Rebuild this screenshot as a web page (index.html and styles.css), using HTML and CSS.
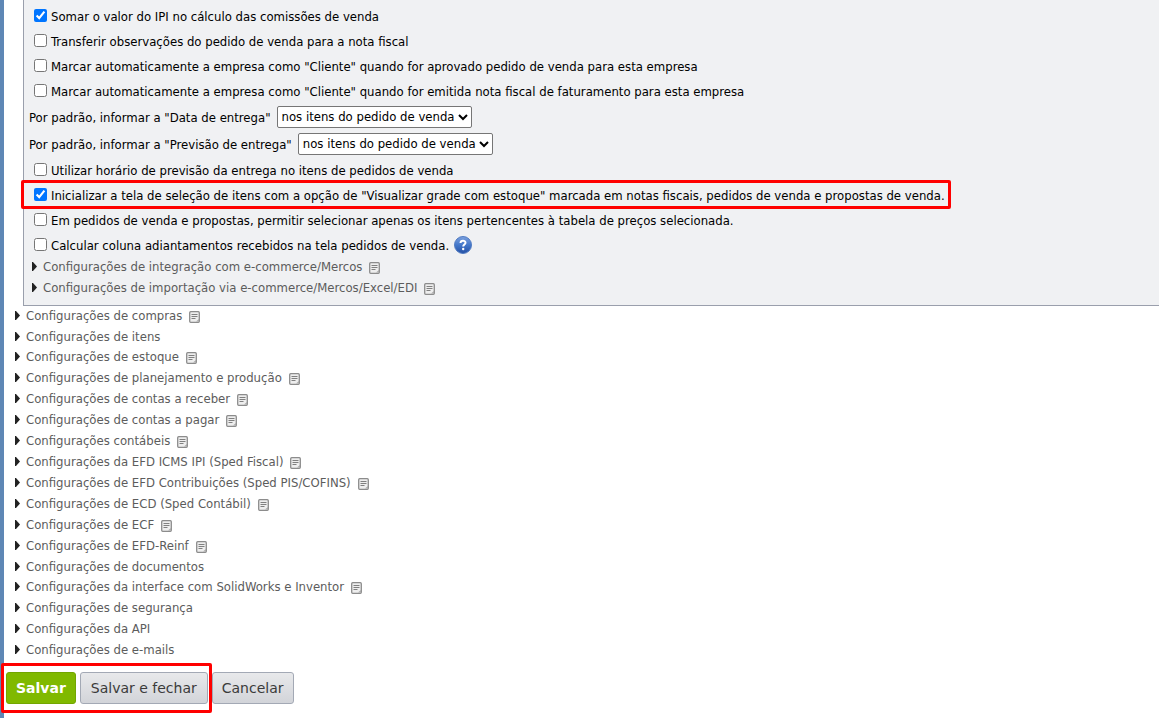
FILE: index.html
```html
<!DOCTYPE html>
<html lang="pt-BR">
<head>
<meta charset="utf-8">
<title>Configurações</title>
<link rel="stylesheet" href="styles.css">
</head>
<body>
<svg class="defs" aria-hidden="true">
  <symbol id="note" viewBox="0 0 11 12">
    <rect x=".7" y=".7" width="9.600" height="10.600" rx="1" fill="#eee" stroke="#8c8c8c" stroke-width="1.300"/>
    <path d="M2.500 3.500h6M2.500 5.500h6M2.500 7.500h4" stroke="#808080" fill="none"/>
    <path d="M7 10.500h3V8z" fill="#aaa"/>
  </symbol>
  <symbol id="arrow" viewBox="0 0 5 9"><path d="M0 0h1l4 4.500L1 9H0z" fill="#222"/></symbol>
</svg>
<form class="page">
  <section class="panel">
    <div class="row"><input type="checkbox" id="c1" checked><label for="c1">Somar o valor do IPI no cálculo das comissões de venda</label></div>
    <div class="row"><input type="checkbox" id="c2"><label for="c2">Transferir observações do pedido de venda para a nota fiscal</label></div>
    <div class="row"><input type="checkbox" id="c3"><label for="c3">Marcar automaticamente a empresa como "Cliente" quando for aprovado pedido de venda para esta empresa</label></div>
    <div class="row"><input type="checkbox" id="c4"><label for="c4">Marcar automaticamente a empresa como "Cliente" quando for emitida nota fiscal de faturamento para esta empresa</label></div>
    <div class="row choice"><label for="s1">Por padrão, informar a "Data de entrega"</label><select id="s1"><option>nos itens do pedido de venda</option></select></div>
    <div class="row choice"><label for="s2">Por padrão, informar a "Previsão de entrega"</label><select id="s2"><option>nos itens do pedido de venda</option></select></div>
    <div class="row"><input type="checkbox" id="c5"><label for="c5">Utilizar horário de previsão da entrega no itens de pedidos de venda</label></div>
    <div class="row marked"><input type="checkbox" id="c6" checked><label for="c6">Inicializar a tela de seleção de itens com a opção de "Visualizar grade com estoque" marcada em notas fiscais, pedidos de venda e propostas de venda.</label></div>
    <div class="row"><input type="checkbox" id="c7"><label for="c7">Em pedidos de venda e propostas, permitir selecionar apenas os itens pertencentes à tabela de preços selecionada.</label></div>
    <div class="row"><input type="checkbox" id="c8"><label for="c8">Calcular coluna adiantamentos recebidos na tela pedidos de venda.</label>
      <svg class="help" viewBox="0 0 18 18" role="img" aria-label="Ajuda"><defs><linearGradient id="g" x2="0" y2="1"><stop stop-color="#7ca0dd"/><stop offset=".5" stop-color="#4377ca"/><stop offset="1" stop-color="#2450a4"/></linearGradient></defs><circle cx="9" cy="9" r="8.500" fill="url(#g)" stroke="#527cc2"/><path d="M6.500 7C6.500 3.900 11.500 3.900 11.500 6.800C11.500 8.500 9.200 8.600 9.200 10.500" fill="none" stroke="#fff" stroke-width="2"/><circle cx="9.200" cy="13" r="1.200" fill="#fff"/></svg></div>
    <ul class="tree">
      <li><svg class="arrow"><use href="#arrow"/></svg><a href="#">Configurações de integração com e-commerce/Mercos</a><svg class="note"><use href="#note"/></svg></li>
      <li><svg class="arrow"><use href="#arrow"/></svg><a href="#">Configurações de importação via e-commerce/Mercos/Excel/EDI</a><svg class="note"><use href="#note"/></svg></li>
    </ul>
  </section>
  <ul class="tree main">
    <li><svg class="arrow"><use href="#arrow"/></svg><a href="#">Configurações de compras</a><svg class="note"><use href="#note"/></svg></li>
    <li class="short"><svg class="arrow"><use href="#arrow"/></svg><a href="#">Configurações de itens</a></li>
    <li><svg class="arrow"><use href="#arrow"/></svg><a href="#">Configurações de estoque</a><svg class="note"><use href="#note"/></svg></li>
    <li><svg class="arrow"><use href="#arrow"/></svg><a href="#">Configurações de planejamento e produção</a><svg class="note"><use href="#note"/></svg></li>
    <li><svg class="arrow"><use href="#arrow"/></svg><a href="#">Configurações de contas a receber</a><svg class="note"><use href="#note"/></svg></li>
    <li><svg class="arrow"><use href="#arrow"/></svg><a href="#">Configurações de contas a pagar</a><svg class="note"><use href="#note"/></svg></li>
    <li><svg class="arrow"><use href="#arrow"/></svg><a href="#">Configurações contábeis</a><svg class="note"><use href="#note"/></svg></li>
    <li><svg class="arrow"><use href="#arrow"/></svg><a href="#">Configurações da EFD ICMS IPI (Sped Fiscal)</a><svg class="note"><use href="#note"/></svg></li>
    <li><svg class="arrow"><use href="#arrow"/></svg><a href="#">Configurações de EFD Contribuições (Sped PIS/COFINS)</a><svg class="note"><use href="#note"/></svg></li>
    <li><svg class="arrow"><use href="#arrow"/></svg><a href="#">Configurações de ECD (Sped Contábil)</a><svg class="note"><use href="#note"/></svg></li>
    <li><svg class="arrow"><use href="#arrow"/></svg><a href="#">Configurações de ECF</a><svg class="note"><use href="#note"/></svg></li>
    <li><svg class="arrow"><use href="#arrow"/></svg><a href="#">Configurações de EFD-Reinf</a><svg class="note"><use href="#note"/></svg></li>
    <li class="short"><svg class="arrow"><use href="#arrow"/></svg><a href="#">Configurações de documentos</a></li>
    <li><svg class="arrow"><use href="#arrow"/></svg><a href="#">Configurações da interface com SolidWorks e Inventor</a><svg class="note"><use href="#note"/></svg></li>
    <li><svg class="arrow"><use href="#arrow"/></svg><a href="#">Configurações de segurança</a></li>
    <li><svg class="arrow"><use href="#arrow"/></svg><a href="#">Configurações da API</a></li>
    <li><svg class="arrow"><use href="#arrow"/></svg><a href="#">Configurações de e-mails</a></li>
  </ul>
  <div class="actions">
    <div class="saves"><button type="button" class="btn primary">Salvar</button><button type="button" class="btn wide">Salvar e fechar</button></div>
    <button type="button" class="btn">Cancelar</button>
  </div>
</form>
</body>
</html>
```
FILE: styles.css
```css
* { box-sizing: border-box; }
body {
  margin: 0;
  background: #fff;
  color: #000;
  font: 13px/19px "DejaVu Sans Condensed", "DejaVu Sans", sans-serif;
}
.defs { display: none; }
.page {
  min-height: 100vh;
  border-left: 4px solid #5e87b5;
}
.panel {
  margin-left: 19px;
  padding: 3px 0 6px 5px;
  background: #f0f1f3;
  border-left: 1px solid #9a9fac;
  border-bottom: 1px solid #9a9fac;
}
.row {
  display: flex;
  align-items: center;
  width: max-content;
  height: 25px;
}
.row label { padding-top: 2px; }
.row input {
  width: 13px;
  height: 13px;
  margin: 0 4px 0 5px;
}
.choice { height: 27px; gap: 6px; }
select {
  height: 22px;
  padding: 0;
  background: #fff;
  color: #000;
  border: 1px solid #767676;
  border-radius: 2px;
  font: inherit;
}
.marked { position: relative; }
.marked::after,
.saves::after {
  content: "";
  position: absolute;
  border: 3px solid #f00;
  border-radius: 2px;
  pointer-events: none;
}
.marked::after { inset: -2px -6px -2px -8px; }
.help { width: 18px; height: 18px; margin-left: 5px; }
.tree {
  margin: 0;
  padding: 0 0 0 3px;
  list-style: none;
}
.tree li { display: flex; align-items: flex-start; height: 21px; }
.tree .short { height: 20px; }
.main { padding-left: 11px; }
.tree a { color: #5c5c5c; text-decoration: none; }
.arrow { width: 5px; height: 9px; margin: 5px 6px 0 0; }
.note { width: 11px; height: 12px; margin: 5px 0 0 7px; }
.actions {
  display: flex;
  gap: 4px;
  padding: 11px 2px 14px;
}
.saves { position: relative; display: flex; gap: 4px; }
.saves::after { inset: -9px -4px -9px -5px; }
.btn {
  height: 32px;
  padding: 0 9px;
  color: #3b3b3b;
  background: linear-gradient(#e8e9eb, #d2d4d9);
  border: 1px solid #a3a9b5;
  border-radius: 3px;
  font: 14px/20px "DejaVu Sans", sans-serif;
}
.wide { padding: 0 10px; }
.primary {
  color: #fff;
  background: #80b900;
  border-color: #72a600;
  font-weight: bold;
}
```
